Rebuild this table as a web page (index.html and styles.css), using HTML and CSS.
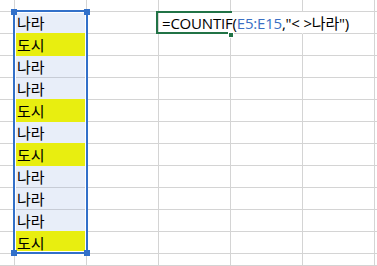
FILE: index.html
```html
<!DOCTYPE html>
<html lang="ko">
<head>
<meta charset="utf-8">
<link rel="stylesheet" href="styles.css">
</head>
<body>
<div class="sheet">
  <!-- row 0 -->
  <div class="c"></div><div class="c"></div><div class="c"></div><div class="c"></div><div class="c"></div><div class="c"></div><div class="c"></div>
  <!-- row 1 -->
  <div class="c"></div><div class="c e bb-y">나라</div><div class="c"></div>
  <div class="c g nor"><span class="formula">=COUNTIF(<span class="ref">E5:E15</span>,"&lt; &gt;나라")</span></div>
  <div class="c nor"></div><div class="c"></div><div class="c"></div>
  <!-- row 2 -->
  <div class="c"></div><div class="c e y">도시</div><div class="c"></div><div class="c"></div><div class="c"></div><div class="c"></div><div class="c"></div>
  <!-- row 3 -->
  <div class="c"></div><div class="c e">나라</div><div class="c"></div><div class="c"></div><div class="c"></div><div class="c"></div><div class="c"></div>
  <!-- row 4 -->
  <div class="c"></div><div class="c e bb-y">나라</div><div class="c"></div><div class="c"></div><div class="c"></div><div class="c"></div><div class="c"></div>
  <!-- row 5 -->
  <div class="c"></div><div class="c e y">도시</div><div class="c"></div><div class="c"></div><div class="c"></div><div class="c"></div><div class="c"></div>
  <!-- row 6 -->
  <div class="c"></div><div class="c e bb-y">나라</div><div class="c"></div><div class="c"></div><div class="c"></div><div class="c"></div><div class="c"></div>
  <!-- row 7 -->
  <div class="c"></div><div class="c e y">도시</div><div class="c"></div><div class="c"></div><div class="c"></div><div class="c"></div><div class="c"></div>
  <!-- row 8 -->
  <div class="c"></div><div class="c e">나라</div><div class="c"></div><div class="c"></div><div class="c"></div><div class="c"></div><div class="c"></div>
  <!-- row 9 -->
  <div class="c"></div><div class="c e">나라</div><div class="c"></div><div class="c"></div><div class="c"></div><div class="c"></div><div class="c"></div>
  <!-- row 10 -->
  <div class="c"></div><div class="c e bb-y">나라</div><div class="c"></div><div class="c"></div><div class="c"></div><div class="c"></div><div class="c"></div>
  <!-- row 11 -->
  <div class="c"></div><div class="c e y">도시</div><div class="c"></div><div class="c"></div><div class="c"></div><div class="c"></div><div class="c"></div>
  <!-- row 12 -->
  <div class="c"></div><div class="c"></div><div class="c"></div><div class="c"></div><div class="c"></div><div class="c"></div><div class="c"></div>

  <div class="range">
    <span class="handle tl"></span><span class="handle tr"></span>
    <span class="handle bl"></span><span class="handle br"></span>
  </div>
</div>
</body>
</html>
```

FILE: styles.css
```css
html, body {
  margin: 0;
  padding: 0;
  background: #ffffff;
}

.sheet {
  position: relative;
  display: grid;
  grid-template-columns: 15px 72px 72px 72px 72px 72px 3px;
  grid-template-rows: 12px repeat(11, 22px) 12px;
  width: 377px;
  height: 266px;
  overflow: hidden;
  font-family: "Noto Sans CJK KR", "Noto Sans", sans-serif;
  font-size: 15px;
  color: #000;
}

.c {
  box-sizing: border-box;
  border-right: 1px solid #d4d4d4;
  border-bottom: 1px solid #d4d4d4;
  display: flex;
  align-items: center;
  padding-left: 2px;
  white-space: nowrap;
  line-height: 20px;
}

.c.e {
  background: #e8eef9;
  border-bottom-color: #c7ccd6;
  padding-left: 2px;
}

.c.e.y,
.c.e.bb-y {
  border-bottom-color: #e8ee10;
}

.c.e.y {
  background: #e8ee10;
}

.c.nor {
  border-right-color: transparent;
}

.c.g {
  position: relative;
  overflow: visible;
  z-index: 2;
  padding-left: 3px;
}

.c.g::before {
  content: "";
  position: absolute;
  left: -3px;
  top: -1px;
  width: 76px;
  height: 23px;
  box-sizing: border-box;
  border: 2px solid #217346;
  border-right: none;
  pointer-events: none;
}

.c.g::after {
  content: "";
  position: absolute;
  left: 69px;
  top: 20px;
  width: 4px;
  height: 4px;
  background: #217346;
  border: 1px solid #fff;
}

.formula {
  font-family: "Open Sans", "Noto Sans CJK KR", sans-serif;
  font-size: 15px;
  letter-spacing: -0.2px;
}

.ref {
  color: #3a6fc4;
}

.range {
  position: absolute;
  left: 13px;
  top: 10px;
  width: 75px;
  height: 244px;
  box-sizing: border-box;
  border: 2px solid #3270c9;
  box-shadow: inset 0 0 0 1px #ffffff;
  pointer-events: none;
}

.handle {
  position: absolute;
  width: 6px;
  height: 6px;
  background: #3270c9;
}

.handle.tl { left: -4px; top: -3px; }
.handle.tr { right: -4px; top: -3px; }
.handle.bl { left: -4px; bottom: -4px; }
.handle.br { right: -4px; bottom: -4px; }
```
